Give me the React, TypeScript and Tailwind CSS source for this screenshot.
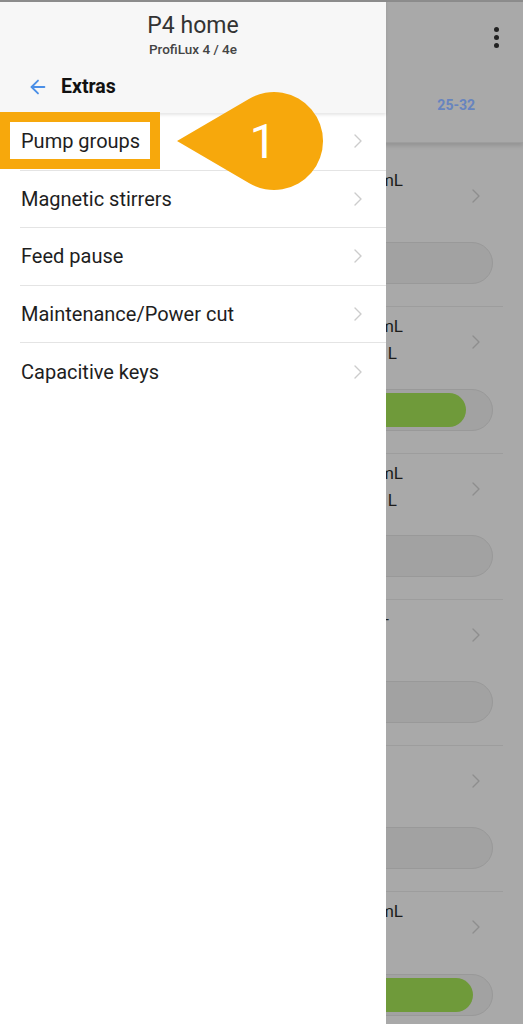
import React from 'react';
import { ArrowLeft, ChevronRight } from 'lucide-react';

const menu = ['Pump groups', 'Magnetic stirrers', 'Feed pause', 'Maintenance/Power cut', 'Capacitive keys'];

type Line = { text: string; pad: number };

const pumps: { lines: Line[]; fill: number }[] = [
  { lines: [{ text: 'Dosed today: 12.0 mL', pad: 0 }], fill: 0 },
  { lines: [{ text: 'Dosed today: 24.0 mL', pad: 0 }, { text: 'Container: 0.85 L', pad: 6 }], fill: 95 },
  { lines: [{ text: 'Dosed today: 18.0 mL', pad: 0 }, { text: 'Container: 0.42 L', pad: 6 }], fill: 0 },
  { lines: [{ text: 'Interval: -', pad: 14 }], fill: 0 },
  { lines: [{ text: '', pad: 0 }], fill: 0 },
  { lines: [{ text: 'Dosed today: 30.0 mL', pad: 0 }], fill: 96.5 },
];

const BackgroundPage: React.FC = () => (
  <div className="min-h-[1024px] bg-[#a9a9a9] border-t-2 border-[#8c8c8c]">
    <div className="h-[141px] flex flex-col border-b border-[#9e9e9e] shadow-[0_3px_4px_rgba(0,0,0,0.12)]">
      <div className="h-[70px] flex items-center justify-end pr-[24px]">
        <div className="flex flex-col gap-[3px]">
          <span className="w-[5px] h-[5px] rounded-full bg-[#222]" />
          <span className="w-[5px] h-[5px] rounded-full bg-[#222]" />
          <span className="w-[5px] h-[5px] rounded-full bg-[#222]" />
        </div>
      </div>
      <div className="flex-1 flex items-center justify-end pr-[48px] pb-[4px]">
        <span className="text-[14px] font-bold text-[#6784bf]">25-32</span>
      </div>
    </div>
    <div className="pt-[18px]">
      {pumps.map((p, i) => (
        <div key={i} className="h-[146.3px] mx-[20px] border-b border-[#9d9d9d] flex flex-col">
          <div className="flex pt-[6px]">
            <div className="w-[383px] text-right text-[17px] leading-[27px] text-[#1c1c1c]">
              {p.lines.map((l, j) => (
                <div key={j} className="whitespace-nowrap" style={{ paddingRight: l.pad }}>
                  {l.text || '\u00a0'}
                </div>
              ))}
            </div>
            <div className="flex-1 flex justify-end pr-[15px] pt-[17px]">
              <ChevronRight className="w-[24px] h-[24px] text-[#8e8e8e]" strokeWidth={1.4} />
            </div>
          </div>
          <div className="mt-auto mb-[22px] h-[42px] mr-[10px] rounded-full bg-[#a2a2a2] border border-[#999999] p-[3px] flex">
            {p.fill > 0 && <div className="h-full rounded-full bg-[#6f9a3a]" style={{ width: `${p.fill}%` }} />}
          </div>
        </div>
      ))}
    </div>
  </div>
);

const Callout: React.FC = () => (
  <svg className="absolute left-[170px] top-[88px]" width="160" height="108" viewBox="0 0 160 108">
    <path d="M7 53 L79.3 10.7 A49 49 0 1 1 79.3 95.3 Z" fill="#f7a80c" />
    <text x="93" y="70" fill="#ffffff" fontSize="48" fontFamily="Roboto, sans-serif" textAnchor="middle">1</text>
  </svg>
);

const App: React.FC = () => {
  return (
    <div className="relative w-[523px] h-[1024px] overflow-hidden font-['Roboto',sans-serif]">
      <BackgroundPage />
      <aside className="absolute left-0 top-0 w-[386px] h-full bg-white">
        <div className="h-[113px] bg-[#f7f7f7] border-t-2 border-[#8c8c8c] shadow-[0_2px_3px_rgba(0,0,0,0.1)] relative">
          <div className="flex flex-col items-center pt-[10px]">
            <span className="text-[23px] leading-[28px] text-[#333]">P4 home</span>
            <span className="text-[13.5px] leading-[18px] font-medium text-[#444]">ProfiLux 4 / 4e</span>
          </div>
          <div className="flex items-center gap-[12px] pl-[27px] pt-[14px]">
            <ArrowLeft className="w-[22px] h-[22px] text-[#4a8fe7]" strokeWidth={2} />
            <span className="text-[19.5px] font-bold text-[#111]">Extras</span>
          </div>
        </div>
        <ul>
          {menu.map((m, i) => (
            <li
              key={m}
              className={`h-[57.5px] ml-[20px] pl-[1px] pr-[16px] flex items-center justify-between ${i < menu.length - 1 ? 'border-b border-[#e4e4e4]' : ''}`}
            >
              <span className="text-[20px] text-[#1e1e1e]">{m}</span>
              <ChevronRight className="w-[24px] h-[24px] text-[#cccccc]" strokeWidth={1.4} />
            </li>
          ))}
        </ul>
      </aside>
      <div className="absolute left-0 top-[112px] w-[160px] h-[57px] border-[10px] border-[#f7a80c]" />
      <Callout />
    </div>
  );
};

export default App;
